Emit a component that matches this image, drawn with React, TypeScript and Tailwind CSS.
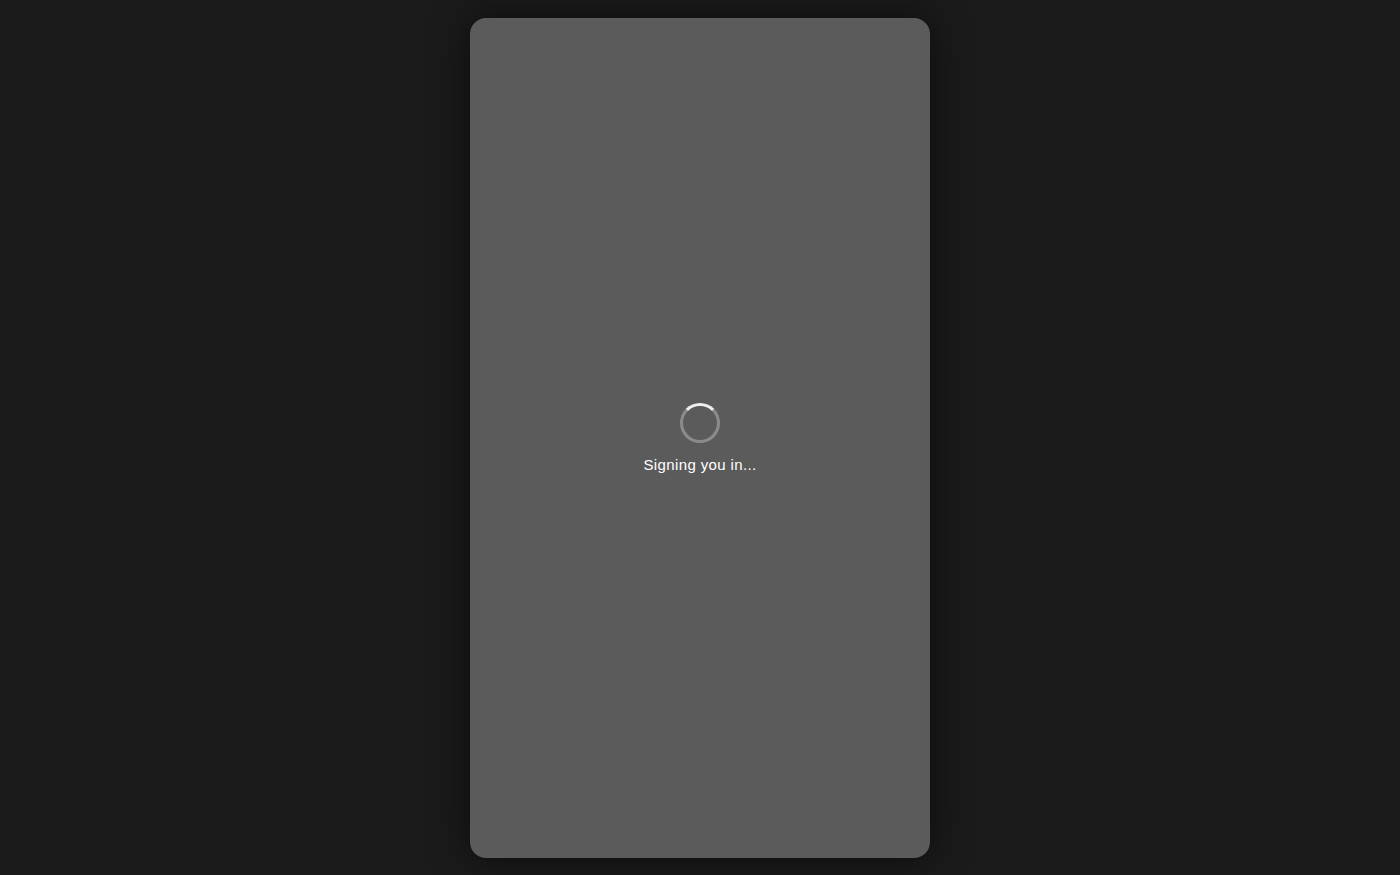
import React from "react";

export default function App() {
  return (
    <div className="min-h-screen w-full bg-[#1b1b1b] flex items-center justify-center" style={{ fontFamily: '"Liberation Sans", Arial, sans-serif' }}>
      <div className="w-[460px] h-[840px] rounded-2xl bg-[#5b5b5b] shadow-[0_0_40px_rgba(0,0,0,0.6)] flex flex-col items-center justify-center gap-3">
        <div className="mt-[2px] w-10 h-10 rounded-full border-[3px] border-white/30 border-t-white/90" />
        <p className="text-[15px] leading-5 tracking-wide text-white">Signing you in...</p>
      </div>
    </div>
  );
}
